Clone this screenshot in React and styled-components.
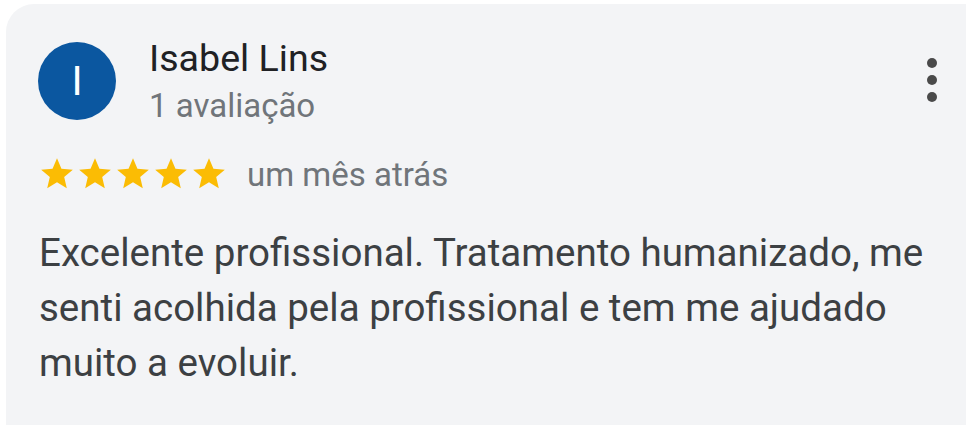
import React from "react";
import styled, { createGlobalStyle } from "styled-components";

const Global = createGlobalStyle`
  html, body { margin: 0; padding: 0; background: #ffffff; }
  body { font-family: Roboto, "Noto Sans", Arial, sans-serif; }
`;

const Page = styled.div`
  width: 967px;
  height: 426px;
  box-sizing: border-box;
  padding: 4px 1px 1px 6px;
  background: #ffffff;
`;

const Card = styled.article`
  box-sizing: border-box;
  height: 100%;
  background: #f3f4f6;
  border-top-left-radius: 28px;
  padding: 32px 22px 0 32px;
  display: flex;
  flex-direction: column;
`;

const Header = styled.header`
  display: flex;
  align-items: center;
`;

const Avatar = styled.div`
  width: 78px;
  height: 78px;
  border-radius: 50%;
  background: #0b57a0;
  color: #ffffff;
  display: flex;
  align-items: center;
  justify-content: center;
  font-size: 41px;
  line-height: 1;
  flex-shrink: 0;
`;

const Who = styled.div`
  margin-left: 33px;
  display: flex;
  flex-direction: column;
  flex: 1;
`;

const Name = styled.div`
  font-size: 37.6px;
  line-height: 44px;
  color: #202124;
`;

const Meta = styled.div`
  font-size: 33px;
  line-height: 40px;
  margin-top: 6px;
  color: #70757a;
`;

const MenuButton = styled.button`
  border: 0;
  background: transparent;
  padding: 0;
  width: 24px;
  height: 48px;
  display: flex;
  align-items: center;
  justify-content: center;
  cursor: pointer;
  margin-top: -2px;
`;

const RatingRow = styled.div`
  display: flex;
  align-items: center;
  margin-top: 29px;
`;

const Stars = styled.div`
  display: flex;
`;

const When = styled.span`
  margin-left: 19px;
  padding-top: 2px;
  font-size: 33px;
  line-height: 34px;
  color: #70757a;
`;

const Body = styled.p`
  margin: 32px 0 0 1px;
  font-size: 38.5px;
  line-height: 55px;
  color: #3c4043;
`;

const Star = () => (
  <svg width="38" height="38" viewBox="0 0 24 24">
    <path
      fill="#fbbc04"
      d="M12 17.27L18.18 21l-1.64-7.03L22 9.24l-7.19-.61L12 2 9.19 8.63 2 9.24l5.46 4.73L5.82 21z"
    />
  </svg>
);

const Kebab = () => (
  <svg width="12" height="46" viewBox="0 0 12 46">
    <circle cx="6" cy="6" r="5" fill="#4a4a4a" />
    <circle cx="6" cy="23" r="5" fill="#4a4a4a" />
    <circle cx="6" cy="40" r="5" fill="#4a4a4a" />
  </svg>
);

export default function App() {
  return (
    <>
      <Global />
      <Page>
        <Card>
          <Header>
            <Avatar>I</Avatar>
            <Who>
              <Name>Isabel Lins</Name>
              <Meta>1 avaliação</Meta>
            </Who>
            <MenuButton aria-label="Mais opções">
              <Kebab />
            </MenuButton>
          </Header>
          <RatingRow>
            <Stars>
              {[0, 1, 2, 3, 4].map((i) => (
                <Star key={i} />
              ))}
            </Stars>
            <When>um mês atrás</When>
          </RatingRow>
          <Body>
            Excelente profissional. Tratamento humanizado, me senti acolhida
            pela profissional e tem me ajudado muito a evoluir.
          </Body>
        </Card>
      </Page>
    </>
  );
}
